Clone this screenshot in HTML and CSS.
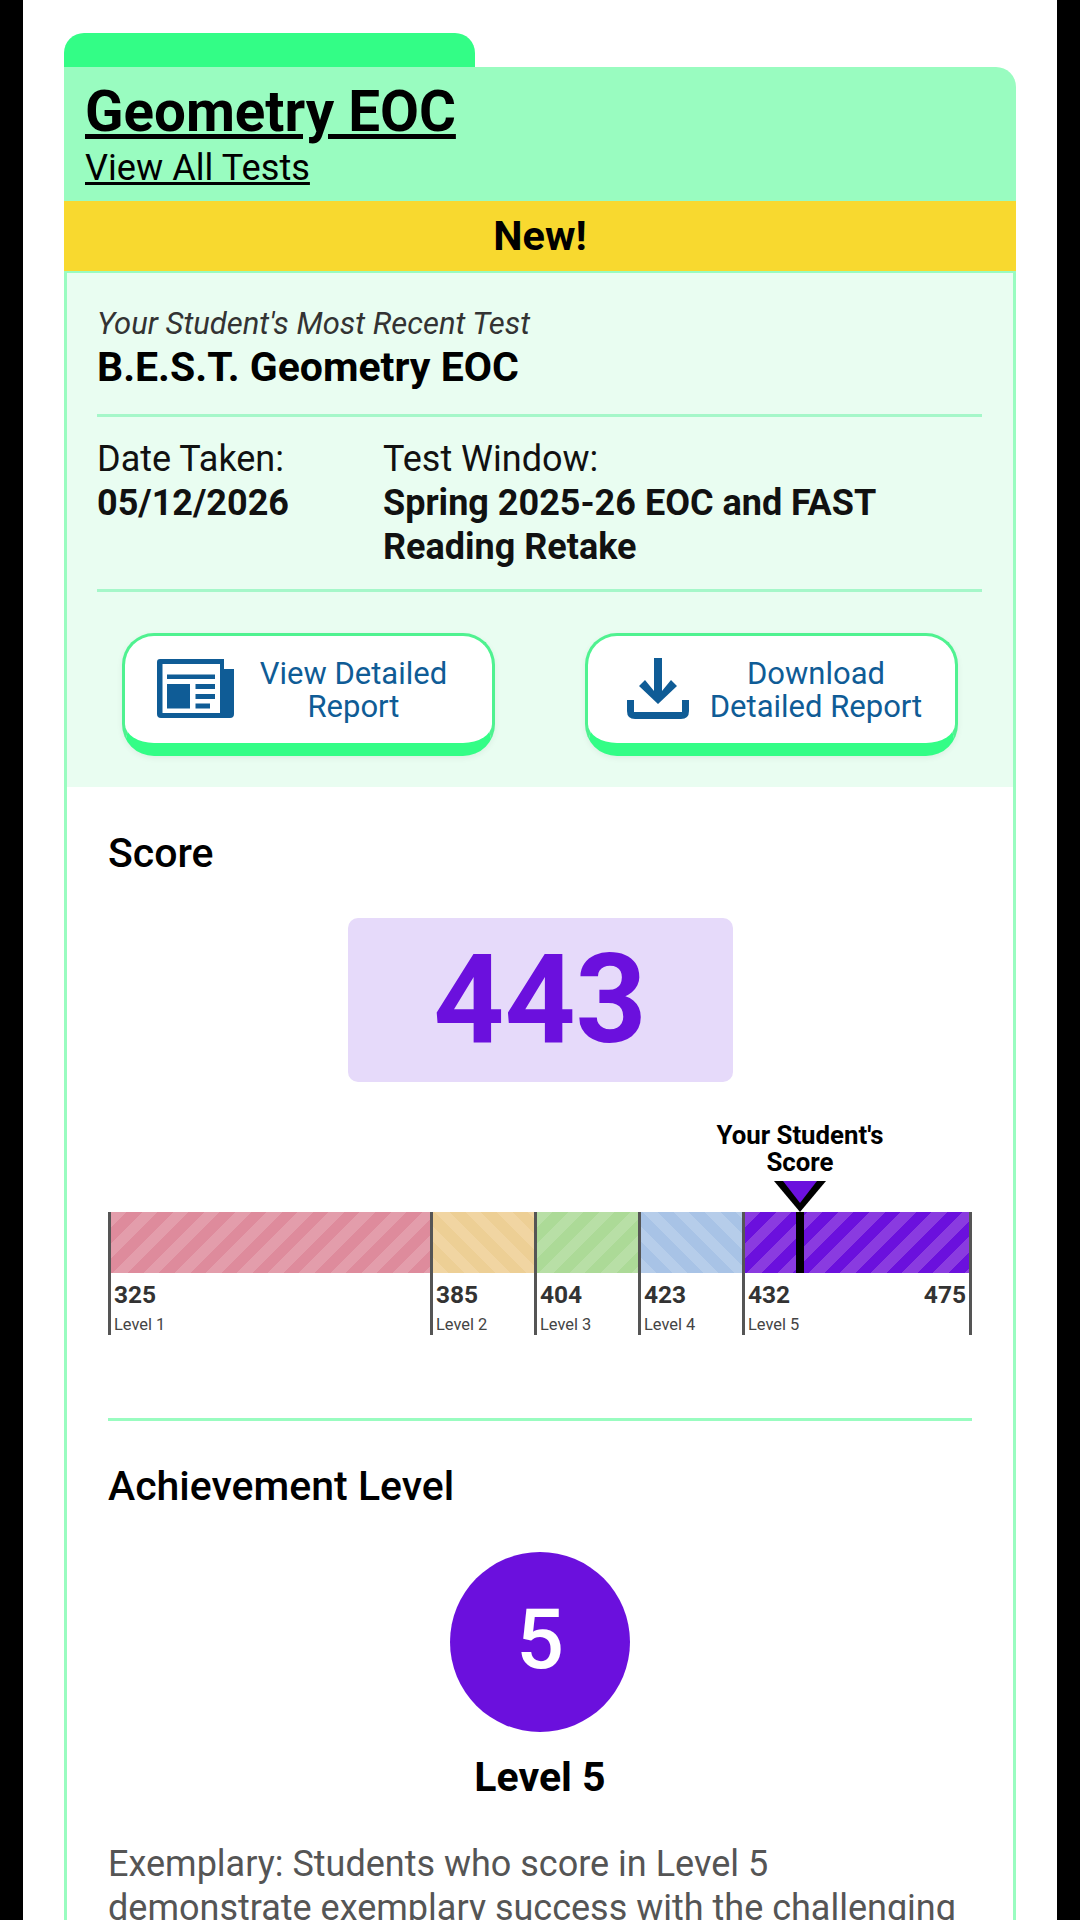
FILE: index.html
```html
<!DOCTYPE html>
<html lang="en">
<head>
    <meta charset="UTF-8">
    <meta name="viewport" content="width=device-width, initial-scale=1.0">
    <title>Geometry EOC - Test Results</title>
    <link rel="stylesheet" href="styles.css">
</head>
<body>
    <div class="page">
        <div class="tab"></div>
        <div class="card-header">
            <a class="subject" href="#">Geometry EOC</a>
            <a class="all-tests" href="#">View All Tests</a>
        </div>
        <div class="new-banner">New!</div>

        <div class="card-body">
            <section class="summary">
                <p class="eyebrow">Your Student's Most Recent Test</p>
                <h2 class="test-name">B.E.S.T. Geometry EOC</h2>

                <div class="test-info">
                    <div class="info-date">
                        <div>Date Taken:</div>
                        <strong>05/12/2026</strong>
                    </div>
                    <div class="info-window">
                        <div>Test Window:</div>
                        <strong>Spring 2025-26 EOC and FAST Reading Retake</strong>
                    </div>
                </div>

                <div class="actions">
                    <a class="report-button" href="#">
                        <svg class="button-icon" width="77" height="59" viewBox="0 0 77 59">
                            <path fill="#0f5c96" fill-rule="evenodd" d="M3 0H67V10H77V55Q77 59 73 59H4Q0 59 0 55V3Q0 0 3 0ZM5.500 5V54H63V5Z"/>
                            <path fill="#0f5c96" d="M10 15.500H58V20H10ZM10 25H33V49.500H10ZM38.500 25H58V30H38.500ZM38.500 35H58V40H38.500ZM38.500 44.500H53V49.500H38.500Z"/>
                        </svg>
                        <span class="button-text">View Detailed<br>Report</span>
                    </a>
                    <a class="report-button report-button-download" href="#">
                        <svg class="button-icon" width="62" height="61" viewBox="0 0 62 61">
                            <path fill="#0f5c96" d="M27 0H35V33L44 22L50 28L31 46L12 28L18 22L27 33Z"/>
                            <path fill="#0f5c96" d="M0 42H7V54H55V42H62V53Q62 61 54 61H8Q0 61 0 53Z"/>
                        </svg>
                        <span class="button-text">Download<br>Detailed Report</span>
                    </a>
                </div>
            </section>

            <section class="results">
                <h3 class="section-title">Score</h3>
                <div class="score-box">443</div>

                <div class="scale">
                    <div class="scale-marker">
                        <div class="marker-label">Your Student's<br>Score</div>
                        <svg class="marker-arrow" width="52" height="31" viewBox="0 0 52 31">
                            <path fill="#000" d="M0 0H52L26 31Z"/>
                            <path fill="#6b10dd" d="M9 0H43L26 22Z"/>
                        </svg>
                        <div class="marker-line"></div>
                    </div>
                    <div class="segment">
                        <div class="band level-1"></div>
                        <div class="cut"><b>325</b><span>Level 1</span></div>
                    </div>
                    <div class="segment">
                        <div class="band level-2"></div>
                        <div class="cut"><b>385</b><span>Level 2</span></div>
                    </div>
                    <div class="segment">
                        <div class="band level-3"></div>
                        <div class="cut"><b>404</b><span>Level 3</span></div>
                    </div>
                    <div class="segment">
                        <div class="band level-4"></div>
                        <div class="cut"><b>423</b><span>Level 4</span></div>
                    </div>
                    <div class="segment segment-last">
                        <div class="band level-5"></div>
                        <div class="cut"><b>432</b><span>Level 5</span></div>
                        <b class="scale-max">475</b>
                    </div>
                </div>

                <hr class="divider">

                <h3 class="section-title">Achievement Level</h3>
                <div class="level-circle">5</div>
                <div class="level-name">Level 5</div>
                <p class="level-text">Exemplary: Students who score in Level 5 demonstrate exemplary success with the challenging content of the standards.</p>
            </section>
        </div>
    </div>
</body>
</html>
```

FILE: styles.css
```css
* {
    margin: 0;
    padding: 0;
    box-sizing: border-box;
}

html, body {
    height: 1920px;
    overflow: hidden;
}

body {
    font-family: Roboto, sans-serif;
    background: #000;
    padding: 0 23px;
}

a {
    color: inherit;
}

.page {
    background: #fff;
    height: 1920px;
    padding: 33px 41px 0;
    overflow: hidden;
}

.tab {
    width: 411px;
    height: 34px;
    background: #33fd86;
    border-radius: 20px 20px 0 0;
}

.card-header {
    height: 134px;
    background: #99fcc0;
    border-radius: 0 20px 0 0;
    padding: 12px 21px 0;
    display: flex;
    flex-direction: column;
    align-items: flex-start;
    color: #000;
}

.subject {
    font-size: 56.500px;
    font-weight: 700;
    line-height: 66px;
}

.all-tests {
    font-size: 36.200px;
    line-height: 46px;
}

.new-banner {
    height: 70px;
    background: #f8d92f;
    font-size: 41.500px;
    font-weight: 700;
    line-height: 70px;
    text-align: center;
}

.card-body {
    border: 3px solid #99fcc0;
    border-bottom: none;
    border-top-width: 2px;
}

.summary {
    height: 514px;
    background: #e9fdf1;
    padding: 32px 31px 0 30px;
}

.eyebrow {
    font-size: 31px;
    font-style: italic;
    line-height: 38px;
    color: #333;
}

.test-name {
    font-size: 41px;
    font-weight: 700;
    line-height: 48px;
    color: #000;
    padding-bottom: 23px;
    border-bottom: 3px solid #a5f7c9;
}

.test-info {
    display: flex;
    padding: 20px 0 20px;
    font-size: 36px;
    line-height: 44px;
    color: #111;
    border-bottom: 3px solid #a5f7c9;
}

.test-info strong {
    display: block;
    font-weight: 700;
}

.info-date {
    width: 286px;
    flex-shrink: 0;
}

.info-window {
    width: 520px;
}

.actions {
    display: flex;
    justify-content: space-between;
    padding: 41px 24px 0 25px;
}

.report-button {
    width: 373px;
    height: 123px;
    background: #fff;
    border: 3px solid #4ff290;
    border-bottom: 13px solid #33fd86;
    border-radius: 32px;
    display: flex;
    align-items: center;
    text-decoration: none;
    color: #0f5c96;
    padding-left: 32px;
    box-shadow: 0 2px 6px rgba(0, 0, 0, 0.06);
}

.report-button-download {
    padding-left: 39px;
}

.button-icon {
    flex-shrink: 0;
    margin-bottom: 2px;
}

.button-text {
    flex: 1;
    text-align: center;
    font-size: 31px;
    line-height: 33px;
    padding-right: 19px;
}

.report-button-download .button-text {
    padding-right: 12px;
}

.results {
    padding: 42px 41px 0;
}

.section-title {
    font-size: 41px;
    font-weight: 500;
    line-height: 48px;
    color: #000;
}

.score-box {
    width: 385px;
    height: 164px;
    margin: 41px auto 0;
    background: #e6dafa;
    border-radius: 10px;
    color: #6b10dd;
    font-size: 124px;
    font-weight: 700;
    line-height: 164px;
    text-align: center;
}

.scale {
    position: relative;
    display: grid;
    grid-template-columns: 322px 104px 104px 104px 1fr;
    margin-top: 130px;
}

.segment {
    position: relative;
    height: 123px;
    border-left: 3px solid #555;
}

.segment-last {
    border-right: 3px solid #555;
}

.band {
    height: 61px;
}

.level-1 {
    background: repeating-linear-gradient(135deg, #e39dab 0 11px, #de8b9c 11px 22px);
}

.level-2 {
    background: repeating-linear-gradient(45deg, #f1d5a2 0 11px, #edcf95 11px 22px);
}

.level-3 {
    background: repeating-linear-gradient(135deg, #b8dfa6 0 11px, #acda97 11px 22px);
}

.level-4 {
    background: repeating-linear-gradient(45deg, #b6cdea 0 11px, #a8c3e6 11px 22px);
}

.level-5 {
    background: repeating-linear-gradient(135deg, #8a3be0 0 11px, #6b10dd 11px 22px);
}

.cut {
    padding: 7px 0 0 3px;
    color: #333;
}

.cut b,
.scale-max {
    display: block;
    font-size: 24.500px;
    font-weight: 700;
    line-height: 30px;
    color: #333;
}

.cut span {
    display: block;
    font-size: 16.400px;
    line-height: 30px;
    color: #444;
}

.scale-max {
    position: absolute;
    right: 3px;
    top: 68px;
}

/* pinned to the bottom of the coloured band */
.scale-marker {
    position: absolute;
    left: 692px;
    bottom: 62px;
    width: 0;
    z-index: 1;
    display: flex;
    flex-direction: column;
    align-items: center;
}

.marker-label {
    flex-shrink: 0;
    width: 200px;
    text-align: center;
    font-size: 25.800px;
    font-weight: 700;
    line-height: 27px;
    color: #000;
    margin-bottom: 5px;
}

.marker-arrow,
.marker-line {
    flex-shrink: 0;
}

.marker-line {
    width: 8px;
    height: 61px;
    background: #000;
}

.divider {
    border: none;
    border-top: 3px solid #99fcc0;
    margin-top: 83px;
}

.results .divider + .section-title {
    margin-top: 41px;
}

.level-circle {
    width: 180px;
    height: 180px;
    margin: 42px auto 0;
    border-radius: 50%;
    background: #6b10dd;
    color: #fff;
    font-size: 84px;
    font-weight: 500;
    line-height: 176px;
    text-align: center;
}

.level-name {
    margin-top: 21px;
    font-size: 41px;
    font-weight: 700;
    line-height: 48px;
    text-align: center;
    color: #000;
}

.level-text {
    margin-top: 41px;
    font-size: 36px;
    line-height: 44px;
    color: #555;
}
```
